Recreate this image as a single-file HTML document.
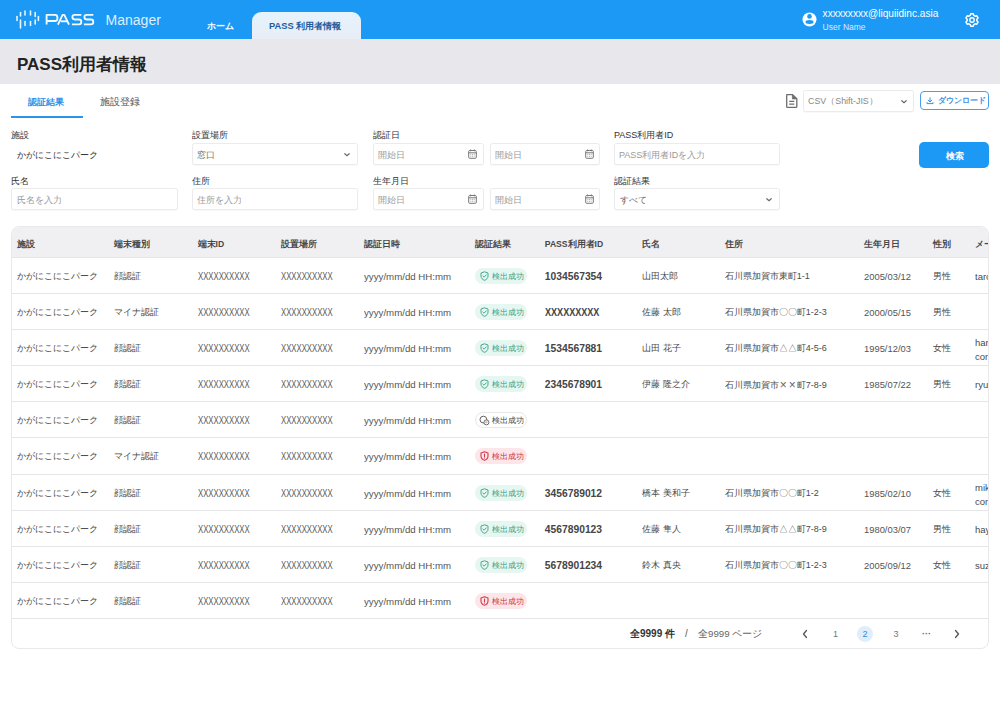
<!DOCTYPE html>
<html lang="ja"><head><meta charset="utf-8"><title>PASS Manager</title><style>
*{box-sizing:border-box;margin:0;padding:0}
html,body{width:1000px;height:711px;overflow:hidden;background:#fff}
body{position:relative;font-family:"Liberation Sans", sans-serif;color:#333}
.a{position:absolute;white-space:nowrap;line-height:1}
#hdr{position:absolute;left:0;top:0;width:1000px;height:39px;background:#1c98f5}
#band{position:absolute;left:0;top:39px;width:1000px;height:45px;background:#e8e8ec}
.inp{position:absolute;height:22px;border:1px solid #ebebeb;border-radius:2.5px;background:#fff;box-shadow:0 1px 1px rgba(0,0,0,0.03)}
.lbl{font-size:9px;color:#333}
.ph{font-size:9px;color:#9a9a9a}
#card{position:absolute;left:11px;top:226px;width:978px;height:423px;border:1px solid #e9e9eb;border-radius:8px;overflow:hidden;background:#fff}
#thead{position:absolute;left:0;top:0;width:100%;height:30px;background:#f0f0f3}
.row{position:absolute;left:0;width:100%;height:36px;border-top:1px solid #e6e6e8}
.th{font-size:8.6px;font-weight:bold;color:#474747}
.td{font-size:9px;color:#4a4a4a}
.tk{font-size:8.5px;color:#4a4a4a}
.tk2{font-size:8.8px;color:#4a4a4a}
.tx{font-size:10px;transform:scaleX(0.775);transform-origin:0 0;color:#555}
.tl{font-size:9.7px;color:#555}
.tdt{font-size:9.4px;color:#555}
.badge{position:absolute;left:463px;top:10px;width:52px;height:16px;border-radius:8px}
</style></head>
<body>
<div id="hdr">
<svg class="a" style="left:14px;top:9px" width="28" height="22" viewBox="14 9 28 22">
<g stroke="#e8f6ff" stroke-width="1.6" stroke-linecap="round">
<path d="M17 16.5V20.5"/><path d="M20.5 12.5V16"/><path d="M20.5 20V28"/>
<path d="M25 11V15"/><path d="M25 21.5V25.5"/><path d="M30.5 11V15"/><path d="M30.5 21.5V25.5"/>
<path d="M35.2 12.5V16.5"/><path d="M35.2 20V24"/><path d="M38.4 16.5V20.5"/>
</g></svg>
<svg class="a" style="left:40px;top:8px" width="60" height="22" viewBox="40 8 60 22"><g fill="none" stroke="#f4fbff" stroke-width="1.85" stroke-linejoin="round" stroke-linecap="butt">
<path d="M46.6,24.6 V14.9 H55 Q57.4,14.9 57.4,17.4 V18.5 Q57.4,21 55,21 H46.6"/>
<path d="M57.9,24.6 L62.6,14.9 H64.3 L69,24.6"/><path d="M60.6,21.3 H67.4"/>
<path d="M81.3,14.9 H74.6 Q72.4,14.9 72.4,17.1 Q72.4,19.5 74.6,19.5 H79 Q81.3,19.5 81.3,21.9 Q81.3,24.3 79,24.3 H71.9"/>
<path d="M93.3,14.9 H86.6 Q84.4,14.9 84.4,17.1 Q84.4,19.5 86.6,19.5 H91 Q93.3,19.5 93.3,21.9 Q93.3,24.3 91,24.3 H83.9"/>
</g></svg>
<span class="a" style="left:105.6px;top:13px;font-size:14px;color:#dcefff">Manager</span>
<span class="a" style="left:206.5px;top:21px;font-size:9.4px;font-weight:bold;color:#fff">ホーム</span>
<div class="a" style="left:252px;top:12px;width:109px;height:27px;border-radius:9px 9px 0 0;background:linear-gradient(#e5f3fd,#e8edf6)"></div>
<span class="a" style="left:269px;top:22px;font-size:9.3px;font-weight:bold;color:#1d5d9c">PASS 利用者情報</span>
<svg class="a" style="left:802px;top:12px" width="15" height="15" viewBox="0 0 15 15"><circle cx="7.5" cy="7.5" r="7" fill="#fff"/><circle cx="7.5" cy="4.4" r="2.3" fill="#1c98f5"/><ellipse cx="7.5" cy="10" rx="4" ry="1.9" fill="#1c98f5"/></svg>
<span class="a" style="left:822.6px;top:9px;font-size:10.1px;color:#fff">xxxxxxxxx@liquiidinc.asia</span>
<span class="a" style="left:822.6px;top:23px;font-size:8.5px;color:#d8ecff">User Name</span>
<svg class="a" style="left:964px;top:11.5px" width="16" height="16" viewBox="-8 -8 16 16"><path d="M-1.84,-4.54 L-1.22,-6.28 L1.22,-6.28 L1.84,-4.54 L3.02,-3.86 L4.83,-4.20 L6.05,-2.08 L4.85,-0.68 L4.85,0.68 L6.05,2.08 L4.83,4.20 L3.02,3.86 L1.84,4.54 L1.22,6.28 L-1.22,6.28 L-1.84,4.54 L-3.02,3.86 L-4.83,4.20 L-6.05,2.08 L-4.85,0.68 L-4.85,-0.68 L-6.05,-2.08 L-4.83,-4.20 L-3.02,-3.86Z" fill="none" stroke="#fff" stroke-width="1.5" stroke-linejoin="round"/><circle r="2.2" fill="none" stroke="#fff" stroke-width="1.4"/></svg>
</div>
<div id="band"><span class="a" style="left:17px;top:16.5px;font-size:17px;font-weight:bold;color:#222">PASS利用者情報</span></div>
<span class="a" style="left:27.5px;top:97px;font-size:9.45px;font-weight:bold;color:#2f90e8">認証結果</span>
<span class="a" style="left:100px;top:97px;font-size:9.7px;color:#555">施設登録</span>
<div class="a" style="left:11px;top:115.5px;width:72px;height:2px;background:#2a93ec"></div>

<svg class="a" style="left:784px;top:92px" width="16" height="18" viewBox="784 92 16 18"><path d="M786.7,94.6 H792.6 L796.8,98.8 V106.4 Q796.8,107.3 795.9,107.3 H787.6 Q786.7,107.3 786.7,106.4 V95.5 Q786.7,94.6 787.6,94.6Z" fill="none" stroke="#6e6e6e" stroke-width="1.3" stroke-linejoin="round"/><path d="M792.4,94.8 V98.9 H796.6Z" fill="#6e6e6e" stroke="#6e6e6e" stroke-width="0.8" stroke-linejoin="round"/><path d="M789.2,101.4 H794.3 M789.2,104.1 H794.3" stroke="#6e6e6e" stroke-width="1.1"/></svg>
<div class="inp" style="left:803px;top:90px;width:111px;height:22px"></div>
<span class="a" style="left:808px;top:97px;font-size:8.9px;color:#888">CSV（Shift-JIS）</span>
<svg class="a" style="left:900px;top:98.5px" width="8" height="6" viewBox="0 0 8 6"><path d="M1.8 1.7 L4 3.7 L6.2 1.7" fill="none" stroke="#6a6a6a" stroke-width="1.15" stroke-linecap="round" stroke-linejoin="round"/></svg>
<div class="a" style="left:920px;top:91px;width:69px;height:18.5px;border:1.3px solid #4a9de8;border-radius:4px"></div>
<svg class="a" style="left:925.5px;top:97px" width="8" height="8" viewBox="0 0 8 8"><path d="M4 0.8V4.8M2.2 3.2L4 5L5.8 3.2M1 5.5V6.6H7V5.5" fill="none" stroke="#3f8fe0" stroke-width="1" stroke-linecap="round" stroke-linejoin="round"/></svg>
<span class="a" style="left:937.8px;top:96.5px;font-size:7.7px;font-weight:bold;color:#3f8fe0">ダウンロード</span>

<span class="a lbl" style="left:11px;top:131px">施設</span>
<span class="a" style="left:17px;top:151px;font-size:8.5px;color:#333">かがにこにこパーク</span>
<span class="a lbl" style="left:192px;top:131px">設置場所</span>
<div class="inp" style="left:192px;top:143px;width:166px"></div>
<span class="a" style="left:197px;top:151px;font-size:9px;color:#777">窓口</span>
<svg class="a" style="left:343px;top:151.5px" width="8" height="6" viewBox="0 0 8 6"><path d="M1.8 1.7 L4 3.7 L6.2 1.7" fill="none" stroke="#6a6a6a" stroke-width="1.15" stroke-linecap="round" stroke-linejoin="round"/></svg>
<span class="a lbl" style="left:372.5px;top:131px">認証日</span>
<div class="inp" style="left:372.5px;top:143px;width:111px"></div>
<span class="a ph" style="left:377.7px;top:151px">開始日</span>
<svg class="a" style="left:468px;top:149px" width="9" height="10" viewBox="0 0 9 10"><rect x="0.7" y="1.5" width="7.6" height="7.8" rx="1" fill="none" stroke="#777" stroke-width="1"/><path d="M0.7 3.8H8.3" stroke="#777" stroke-width="1"/><path d="M2.6 0.5V2.3M6.4 0.5V2.3" stroke="#777" stroke-width="1"/><path d="M2.3 5.6h1M4 5.6h1M5.7 5.6h1M2.3 7.3h1M4 7.3h1M5.7 7.3h1" stroke="#999" stroke-width="0.8"/></svg>
<div class="inp" style="left:489.5px;top:143px;width:110px"></div>
<span class="a ph" style="left:494.7px;top:151px">開始日</span>
<svg class="a" style="left:585px;top:149px" width="9" height="10" viewBox="0 0 9 10"><rect x="0.7" y="1.5" width="7.6" height="7.8" rx="1" fill="none" stroke="#777" stroke-width="1"/><path d="M0.7 3.8H8.3" stroke="#777" stroke-width="1"/><path d="M2.6 0.5V2.3M6.4 0.5V2.3" stroke="#777" stroke-width="1"/><path d="M2.3 5.6h1M4 5.6h1M5.7 5.6h1M2.3 7.3h1M4 7.3h1M5.7 7.3h1" stroke="#999" stroke-width="0.8"/></svg>
<span class="a lbl" style="left:614px;top:131px">PASS利用者ID</span>
<div class="inp" style="left:614px;top:143px;width:166px"></div>
<span class="a ph" style="left:619px;top:151px">PASS利用者IDを入力</span>
<div class="a" style="left:919px;top:142px;width:70px;height:26px;border-radius:5px;background:#1c98f5"></div>
<span class="a" style="left:945.5px;top:151.5px;font-size:8.7px;font-weight:bold;color:#fff">検索</span>

<span class="a lbl" style="left:11px;top:177px">氏名</span>
<div class="inp" style="left:11px;top:188px;width:167px"></div>
<span class="a ph" style="left:17px;top:196px">氏名を入力</span>
<span class="a lbl" style="left:192px;top:177px">住所</span>
<div class="inp" style="left:192px;top:188px;width:166px"></div>
<span class="a ph" style="left:197px;top:196px">住所を入力</span>
<span class="a lbl" style="left:372.5px;top:177px">生年月日</span>
<div class="inp" style="left:372.5px;top:188px;width:111px"></div>
<span class="a ph" style="left:377.7px;top:196px">開始日</span>
<svg class="a" style="left:468px;top:194px" width="9" height="10" viewBox="0 0 9 10"><rect x="0.7" y="1.5" width="7.6" height="7.8" rx="1" fill="none" stroke="#777" stroke-width="1"/><path d="M0.7 3.8H8.3" stroke="#777" stroke-width="1"/><path d="M2.6 0.5V2.3M6.4 0.5V2.3" stroke="#777" stroke-width="1"/><path d="M2.3 5.6h1M4 5.6h1M5.7 5.6h1M2.3 7.3h1M4 7.3h1M5.7 7.3h1" stroke="#999" stroke-width="0.8"/></svg>
<div class="inp" style="left:489.5px;top:188px;width:110px"></div>
<span class="a ph" style="left:494.7px;top:196px">開始日</span>
<svg class="a" style="left:585px;top:194px" width="9" height="10" viewBox="0 0 9 10"><rect x="0.7" y="1.5" width="7.6" height="7.8" rx="1" fill="none" stroke="#777" stroke-width="1"/><path d="M0.7 3.8H8.3" stroke="#777" stroke-width="1"/><path d="M2.6 0.5V2.3M6.4 0.5V2.3" stroke="#777" stroke-width="1"/><path d="M2.3 5.6h1M4 5.6h1M5.7 5.6h1M2.3 7.3h1M4 7.3h1M5.7 7.3h1" stroke="#999" stroke-width="0.8"/></svg>
<span class="a lbl" style="left:614px;top:177px">認証結果</span>
<div class="inp" style="left:614px;top:188px;width:166px"></div>
<span class="a" style="left:620px;top:196px;font-size:9px;color:#666">すべて</span>
<svg class="a" style="left:765px;top:196.5px" width="8" height="6" viewBox="0 0 8 6"><path d="M1.8 1.7 L4 3.7 L6.2 1.7" fill="none" stroke="#6a6a6a" stroke-width="1.15" stroke-linecap="round" stroke-linejoin="round"/></svg>

<div id="card">
<div id="thead"><span class="a th" style="left:4.800000000000001px;top:12.5px">施設</span><span class="a th" style="left:102px;top:12.5px">端末種別</span><span class="a th" style="left:185.5px;top:12.5px">端末ID</span><span class="a th" style="left:268.6px;top:12.5px">設置場所</span><span class="a th" style="left:352px;top:12.5px">認証日時</span><span class="a th" style="left:463.4px;top:12.5px">認証結果</span><span class="a th" style="left:532.8px;top:12.5px">PASS利用者ID</span><span class="a th" style="left:630px;top:12.5px">氏名</span><span class="a th" style="left:712.8px;top:12.5px">住所</span><span class="a th" style="left:852px;top:12.5px">生年月日</span><span class="a th" style="left:921.4px;top:12.5px">性別</span><span class="a th" style="left:963px;top:12.5px">メールアドレス</span></div>
<div class="row" style="top:30px"><span class="a tk" style="left:4.800000000000001px;top:14px">かがにこにこパーク</span><span class="a tk2" style="left:102px;top:14px">顔認証</span><span class="a tx" style="left:185.5px;top:14px">XXXXXXXXXX</span><span class="a tx" style="left:268.6px;top:14px">XXXXXXXXXX</span><span class="a tl" style="left:352px;top:14px">yyyy/mm/dd HH:mm</span><div class="badge" style="background:#e6f6f1"><svg width="9" height="10" viewBox="0 0 9 10" style="position:absolute;left:5px;top:3px"><path d="M4.5 0.8 L8 2 V5 C8 7.2 6.5 8.6 4.5 9.3 C2.5 8.6 1 7.2 1 5 V2 Z" fill="none" stroke="#3aa086" stroke-width="0.9" stroke-linejoin="round"/><path d="M2.9 5 L4.1 6.2 L6.2 3.9" fill="none" stroke="#3aa086" stroke-width="0.9" stroke-linecap="round" stroke-linejoin="round"/></svg><span class="a" style="left:17px;top:5px;font-size:7.9px;color:#37a084">検出成功</span></div><span class="a" style="left:532.8px;top:14px;font-size:10.3px;font-weight:bold;color:#454545;">1034567354</span><span class="a td" style="left:630px;top:14px">山田太郎</span><span class="a td" style="left:712.8px;top:14px">石川県加賀市東町1-1</span><span class="a tdt" style="left:852px;top:14px">2005/03/12</span><span class="a td" style="left:921.4px;top:14px">男性</span><span class="a td" style="left:963px;top:13.5px;font-size:9.5px">taro</span></div><div class="row" style="top:66px"><span class="a tk" style="left:4.800000000000001px;top:14px">かがにこにこパーク</span><span class="a tk2" style="left:102px;top:14px">マイナ認証</span><span class="a tx" style="left:185.5px;top:14px">XXXXXXXXXX</span><span class="a tx" style="left:268.6px;top:14px">XXXXXXXXXX</span><span class="a tl" style="left:352px;top:14px">yyyy/mm/dd HH:mm</span><div class="badge" style="background:#e6f6f1"><svg width="9" height="10" viewBox="0 0 9 10" style="position:absolute;left:5px;top:3px"><path d="M4.5 0.8 L8 2 V5 C8 7.2 6.5 8.6 4.5 9.3 C2.5 8.6 1 7.2 1 5 V2 Z" fill="none" stroke="#3aa086" stroke-width="0.9" stroke-linejoin="round"/><path d="M2.9 5 L4.1 6.2 L6.2 3.9" fill="none" stroke="#3aa086" stroke-width="0.9" stroke-linecap="round" stroke-linejoin="round"/></svg><span class="a" style="left:17px;top:5px;font-size:7.9px;color:#37a084">検出成功</span></div><span class="a" style="left:532.8px;top:14px;font-size:10.3px;font-weight:bold;color:#454545;transform:scaleX(0.88);transform-origin:0 0;color:#444;">XXXXXXXXX</span><span class="a td" style="left:630px;top:14px">佐藤 太郎</span><span class="a td" style="left:712.8px;top:14px">石川県加賀市〇〇町1-2-3</span><span class="a tdt" style="left:852px;top:14px">2000/05/15</span><span class="a td" style="left:921.4px;top:14px">男性</span></div><div class="row" style="top:102px"><span class="a tk" style="left:4.800000000000001px;top:14px">かがにこにこパーク</span><span class="a tk2" style="left:102px;top:14px">顔認証</span><span class="a tx" style="left:185.5px;top:14px">XXXXXXXXXX</span><span class="a tx" style="left:268.6px;top:14px">XXXXXXXXXX</span><span class="a tl" style="left:352px;top:14px">yyyy/mm/dd HH:mm</span><div class="badge" style="background:#e6f6f1"><svg width="9" height="10" viewBox="0 0 9 10" style="position:absolute;left:5px;top:3px"><path d="M4.5 0.8 L8 2 V5 C8 7.2 6.5 8.6 4.5 9.3 C2.5 8.6 1 7.2 1 5 V2 Z" fill="none" stroke="#3aa086" stroke-width="0.9" stroke-linejoin="round"/><path d="M2.9 5 L4.1 6.2 L6.2 3.9" fill="none" stroke="#3aa086" stroke-width="0.9" stroke-linecap="round" stroke-linejoin="round"/></svg><span class="a" style="left:17px;top:5px;font-size:7.9px;color:#37a084">検出成功</span></div><span class="a" style="left:532.8px;top:14px;font-size:10.3px;font-weight:bold;color:#454545;">1534567881</span><span class="a td" style="left:630px;top:14px">山田 花子</span><span class="a td" style="left:712.8px;top:14px">石川県加賀市△△町4-5-6</span><span class="a tdt" style="left:852px;top:14px">1995/12/03</span><span class="a td" style="left:921.4px;top:14px">女性</span><span class="a td" style="left:963px;top:8px;font-size:9.5px">hanako</span><span class="a td" style="left:963px;top:22px;font-size:9.5px">com</span></div><div class="row" style="top:138px"><span class="a tk" style="left:4.800000000000001px;top:14px">かがにこにこパーク</span><span class="a tk2" style="left:102px;top:14px">顔認証</span><span class="a tx" style="left:185.5px;top:14px">XXXXXXXXXX</span><span class="a tx" style="left:268.6px;top:14px">XXXXXXXXXX</span><span class="a tl" style="left:352px;top:14px">yyyy/mm/dd HH:mm</span><div class="badge" style="background:#e6f6f1"><svg width="9" height="10" viewBox="0 0 9 10" style="position:absolute;left:5px;top:3px"><path d="M4.5 0.8 L8 2 V5 C8 7.2 6.5 8.6 4.5 9.3 C2.5 8.6 1 7.2 1 5 V2 Z" fill="none" stroke="#3aa086" stroke-width="0.9" stroke-linejoin="round"/><path d="M2.9 5 L4.1 6.2 L6.2 3.9" fill="none" stroke="#3aa086" stroke-width="0.9" stroke-linecap="round" stroke-linejoin="round"/></svg><span class="a" style="left:17px;top:5px;font-size:7.9px;color:#37a084">検出成功</span></div><span class="a" style="left:532.8px;top:14px;font-size:10.3px;font-weight:bold;color:#454545;">2345678901</span><span class="a td" style="left:630px;top:14px">伊藤 隆之介</span><span class="a td" style="left:712.8px;top:14px">石川県加賀市<span style="display:inline-block;width:9px;font-size:12px;line-height:9px;text-align:center;position:relative;top:1px;color:#666">×</span><span style="display:inline-block;width:9px;font-size:12px;line-height:9px;text-align:center;position:relative;top:1px;color:#666">×</span>町7-8-9</span><span class="a tdt" style="left:852px;top:14px">1985/07/22</span><span class="a td" style="left:921.4px;top:14px">男性</span><span class="a td" style="left:963px;top:13.5px;font-size:9.5px">ryu</span></div><div class="row" style="top:174px"><span class="a tk" style="left:4.800000000000001px;top:14px">かがにこにこパーク</span><span class="a tk2" style="left:102px;top:14px">顔認証</span><span class="a tx" style="left:185.5px;top:14px">XXXXXXXXXX</span><span class="a tx" style="left:268.6px;top:14px">XXXXXXXXXX</span><span class="a tl" style="left:352px;top:14px">yyyy/mm/dd HH:mm</span><div class="badge" style="background:#fff;border:1px solid #e8e8e8"><svg width="11" height="11" viewBox="0 0 11 11" style="position:absolute;left:3px;top:1.5px"><circle cx="4.4" cy="4.6" r="3.4" fill="none" stroke="#5a5a5a" stroke-width="0.95"/><circle cx="7.4" cy="7.4" r="2.5" fill="#fff" stroke="#5a5a5a" stroke-width="0.9"/><path d="M6.8 6.5 V8.1 M7.9 6.5 V8.1" fill="none" stroke="#666" stroke-width="0.6"/></svg><span class="a" style="left:16px;top:4px;font-size:7.9px;color:#444">検出成功</span></div></div><div class="row" style="top:210px"><span class="a tk" style="left:4.800000000000001px;top:14px">かがにこにこパーク</span><span class="a tk2" style="left:102px;top:14px">マイナ認証</span><span class="a tx" style="left:185.5px;top:14px">XXXXXXXXXX</span><span class="a tx" style="left:268.6px;top:14px">XXXXXXXXXX</span><span class="a tl" style="left:352px;top:14px">yyyy/mm/dd HH:mm</span><div class="badge" style="background:#fde6e9"><svg width="9" height="10" viewBox="0 0 9 10" style="position:absolute;left:5px;top:3px"><path d="M4.5 0.8 L8 2 V5 C8 7.2 6.5 8.6 4.5 9.3 C2.5 8.6 1 7.2 1 5 V2 Z" fill="none" stroke="#d23a4a" stroke-width="1.1" stroke-linejoin="round"/><path d="M4.5 3 V5.4" stroke="#d23a4a" stroke-width="1.1" stroke-linecap="round"/><circle cx="4.5" cy="6.9" r="0.6" fill="#d23a4a"/></svg><span class="a" style="left:17px;top:5px;font-size:7.9px;color:#cc3344">検出成功</span></div></div><div class="row" style="top:247px"><span class="a tk" style="left:4.800000000000001px;top:14px">かがにこにこパーク</span><span class="a tk2" style="left:102px;top:14px">顔認証</span><span class="a tx" style="left:185.5px;top:14px">XXXXXXXXXX</span><span class="a tx" style="left:268.6px;top:14px">XXXXXXXXXX</span><span class="a tl" style="left:352px;top:14px">yyyy/mm/dd HH:mm</span><div class="badge" style="background:#e6f6f1"><svg width="9" height="10" viewBox="0 0 9 10" style="position:absolute;left:5px;top:3px"><path d="M4.5 0.8 L8 2 V5 C8 7.2 6.5 8.6 4.5 9.3 C2.5 8.6 1 7.2 1 5 V2 Z" fill="none" stroke="#3aa086" stroke-width="0.9" stroke-linejoin="round"/><path d="M2.9 5 L4.1 6.2 L6.2 3.9" fill="none" stroke="#3aa086" stroke-width="0.9" stroke-linecap="round" stroke-linejoin="round"/></svg><span class="a" style="left:17px;top:5px;font-size:7.9px;color:#37a084">検出成功</span></div><span class="a" style="left:532.8px;top:14px;font-size:10.3px;font-weight:bold;color:#454545;">3456789012</span><span class="a td" style="left:630px;top:14px">橋本 美和子</span><span class="a td" style="left:712.8px;top:14px">石川県加賀市〇〇町1-2</span><span class="a tdt" style="left:852px;top:14px">1985/02/10</span><span class="a td" style="left:921.4px;top:14px">女性</span><span class="a td" style="left:963px;top:8px;font-size:9.5px">mika</span><span class="a td" style="left:963px;top:22px;font-size:9.5px">com</span></div><div class="row" style="top:283px"><span class="a tk" style="left:4.800000000000001px;top:14px">かがにこにこパーク</span><span class="a tk2" style="left:102px;top:14px">顔認証</span><span class="a tx" style="left:185.5px;top:14px">XXXXXXXXXX</span><span class="a tx" style="left:268.6px;top:14px">XXXXXXXXXX</span><span class="a tl" style="left:352px;top:14px">yyyy/mm/dd HH:mm</span><div class="badge" style="background:#e6f6f1"><svg width="9" height="10" viewBox="0 0 9 10" style="position:absolute;left:5px;top:3px"><path d="M4.5 0.8 L8 2 V5 C8 7.2 6.5 8.6 4.5 9.3 C2.5 8.6 1 7.2 1 5 V2 Z" fill="none" stroke="#3aa086" stroke-width="0.9" stroke-linejoin="round"/><path d="M2.9 5 L4.1 6.2 L6.2 3.9" fill="none" stroke="#3aa086" stroke-width="0.9" stroke-linecap="round" stroke-linejoin="round"/></svg><span class="a" style="left:17px;top:5px;font-size:7.9px;color:#37a084">検出成功</span></div><span class="a" style="left:532.8px;top:14px;font-size:10.3px;font-weight:bold;color:#454545;">4567890123</span><span class="a td" style="left:630px;top:14px">佐藤 隼人</span><span class="a td" style="left:712.8px;top:14px">石川県加賀市△△町7-8-9</span><span class="a tdt" style="left:852px;top:14px">1980/03/07</span><span class="a td" style="left:921.4px;top:14px">男性</span><span class="a td" style="left:963px;top:13.5px;font-size:9.5px">hay</span></div><div class="row" style="top:319px"><span class="a tk" style="left:4.800000000000001px;top:14px">かがにこにこパーク</span><span class="a tk2" style="left:102px;top:14px">顔認証</span><span class="a tx" style="left:185.5px;top:14px">XXXXXXXXXX</span><span class="a tx" style="left:268.6px;top:14px">XXXXXXXXXX</span><span class="a tl" style="left:352px;top:14px">yyyy/mm/dd HH:mm</span><div class="badge" style="background:#e6f6f1"><svg width="9" height="10" viewBox="0 0 9 10" style="position:absolute;left:5px;top:3px"><path d="M4.5 0.8 L8 2 V5 C8 7.2 6.5 8.6 4.5 9.3 C2.5 8.6 1 7.2 1 5 V2 Z" fill="none" stroke="#3aa086" stroke-width="0.9" stroke-linejoin="round"/><path d="M2.9 5 L4.1 6.2 L6.2 3.9" fill="none" stroke="#3aa086" stroke-width="0.9" stroke-linecap="round" stroke-linejoin="round"/></svg><span class="a" style="left:17px;top:5px;font-size:7.9px;color:#37a084">検出成功</span></div><span class="a" style="left:532.8px;top:14px;font-size:10.3px;font-weight:bold;color:#454545;">5678901234</span><span class="a td" style="left:630px;top:14px">鈴木 真央</span><span class="a td" style="left:712.8px;top:14px">石川県加賀市〇〇町1-2-3</span><span class="a tdt" style="left:852px;top:14px">2005/09/12</span><span class="a td" style="left:921.4px;top:14px">女性</span><span class="a td" style="left:963px;top:13.5px;font-size:9.5px">suz</span></div><div class="row" style="top:355px"><span class="a tk" style="left:4.800000000000001px;top:14px">かがにこにこパーク</span><span class="a tk2" style="left:102px;top:14px">顔認証</span><span class="a tx" style="left:185.5px;top:14px">XXXXXXXXXX</span><span class="a tx" style="left:268.6px;top:14px">XXXXXXXXXX</span><span class="a tl" style="left:352px;top:14px">yyyy/mm/dd HH:mm</span><div class="badge" style="background:#fde6e9"><svg width="9" height="10" viewBox="0 0 9 10" style="position:absolute;left:5px;top:3px"><path d="M4.5 0.8 L8 2 V5 C8 7.2 6.5 8.6 4.5 9.3 C2.5 8.6 1 7.2 1 5 V2 Z" fill="none" stroke="#d23a4a" stroke-width="1.1" stroke-linejoin="round"/><path d="M4.5 3 V5.4" stroke="#d23a4a" stroke-width="1.1" stroke-linecap="round"/><circle cx="4.5" cy="6.9" r="0.6" fill="#d23a4a"/></svg><span class="a" style="left:17px;top:5px;font-size:7.9px;color:#cc3344">検出成功</span></div></div>
<div class="row" style="top:391px;height:31px">
<span class="a" style="left:618px;top:10px;font-size:10px;font-weight:bold;color:#333">全9999 件</span>
<span class="a" style="left:673px;top:10px;font-size:10px;color:#555">/</span>
<span class="a" style="left:686px;top:10px;font-size:9.7px;color:#666">全9999 ページ</span>
<svg class="a" style="left:789px;top:10px" width="8" height="10" viewBox="0 0 8 10"><path d="M5.5 1.5L2.5 5L5.5 8.5" fill="none" stroke="#555" stroke-width="1.3" stroke-linecap="round" stroke-linejoin="round"/></svg>
<span class="a" style="left:821px;top:11px;font-size:9px;color:#777">1</span>
<div class="a" style="left:845px;top:7px;width:16px;height:16px;border-radius:8px;background:#e0eefb"></div>
<span class="a" style="left:850.5px;top:11px;font-size:9px;color:#2a8ae6">2</span>
<span class="a" style="left:881.5px;top:11px;font-size:9px;color:#777">3</span>
<span class="a" style="left:910px;top:11px;font-size:9px;font-weight:bold;color:#666">···</span>
<svg class="a" style="left:941px;top:10px" width="8" height="10" viewBox="0 0 8 10"><path d="M2.5 1.5L5.5 5L2.5 8.5" fill="none" stroke="#555" stroke-width="1.3" stroke-linecap="round" stroke-linejoin="round"/></svg>
</div>
</div>
</body></html>
